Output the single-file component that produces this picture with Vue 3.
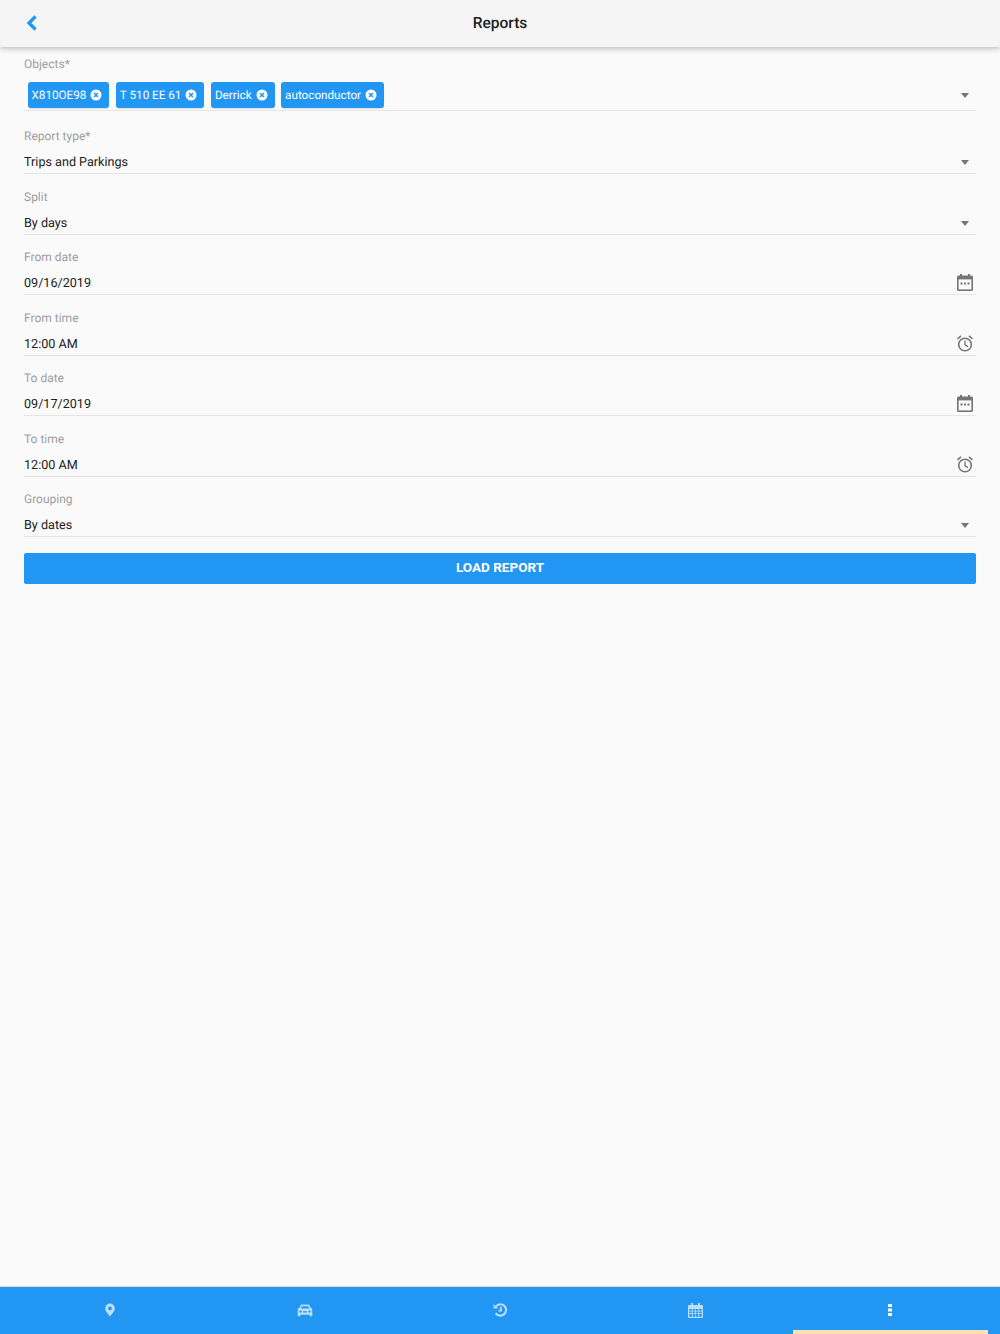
<template>
  <div class="page">
    <header class="topbar">
      <button class="back" aria-label="Back">
        <svg width="14" height="18" viewBox="0 0 14 18"><path d="M10.5 2.5 4 9l6.500 6.500" fill="none" stroke="#2196f3" stroke-width="3.200" /></svg>
      </button>
      <h1 class="title">Reports</h1>
    </header>

    <main class="form">
      <div class="field objects">
        <label>Objects*</label>
        <div class="control">
          <div class="chips">
            <span v-for="chip in chips" :key="chip" class="chip">
              {{ chip }}
              <svg width="12" height="12" viewBox="0 0 12 12">
                <circle cx="6" cy="6" r="5.500" fill="#fff" />
                <path d="M4 4l4 4M8 4l-4 4" stroke="#2196f3" stroke-width="1.500" />
              </svg>
            </span>
          </div>
          <span class="caret"></span>
        </div>
      </div>

      <div v-for="field in fields" :key="field.label" class="field">
        <label>{{ field.label }}</label>
        <div class="control">
          <span class="value">{{ field.value }}</span>
          <span v-if="field.icon === 'select'" class="caret"></span>
          <svg v-else-if="field.icon === 'date'" class="side-icon" width="16" height="17" viewBox="0 0 16 17">
            <path fill="#757575" d="M3 0h2v1.500h6V0h2v1.500h1.500A1.500 1.500 0 0 1 16 3v12.500a1.500 1.500 0 0 1-1.500 1.500h-13A1.500 1.500 0 0 1 0 15.500V3a1.500 1.500 0 0 1 1.500-1.500H3z" />
            <rect x="1.600" y="5.400" width="12.800" height="10" fill="#fafafa" />
            <path fill="#757575" d="M3.500 8.500h2v2h-2zM7 8.500h2v2H7zM10.500 8.500h2v2h-2z" />
          </svg>
          <svg v-else class="side-icon" width="16" height="17" viewBox="0 0 16 17">
            <circle cx="8" cy="9.500" r="6.300" fill="none" stroke="#757575" stroke-width="1.600" />
            <path d="M8 5.500v4.300l3 1.800" fill="none" stroke="#757575" stroke-width="1.300" />
            <path d="M.5 3.800 4 .9M15.500 3.800 12 .9" fill="none" stroke="#757575" stroke-width="1.500" />
          </svg>
        </div>
      </div>

      <button class="load">LOAD REPORT</button>
    </main>

    <nav class="tabs">
      <div class="tab">
        <svg width="12" height="14" viewBox="0 0 12 14">
          <path fill-rule="evenodd" fill="#bbdefb" d="M6 .5a4.800 4.800 0 0 1 4.800 4.800C10.800 8.300 7.500 11.500 6 13.500 4.500 11.500 1.200 8.300 1.200 5.300A4.800 4.800 0 0 1 6 .5zm0 3a1.900 1.900 0 1 0 0 3.800 1.900 1.900 0 0 0 0-3.800z" />
        </svg>
      </div>
      <div class="tab">
        <svg width="16" height="13" viewBox="0 0 16 12" preserveAspectRatio="none">
          <path fill-rule="evenodd" fill="#bbdefb" d="M4.700.5h6.600c.6 0 1 .3 1.300.9l1 2.300h1.100c.4 0 .6.300.5.600l-.2.600-.3.100c.4.400.6.900.6 1.400v4.300c0 .3-.2.500-.5.500h-1.700c-.3 0-.5-.2-.5-.5v-.8H3.400v.8c0 .3-.2.500-.5.500H1.200c-.3 0-.5-.2-.5-.5V6.400c0-.5.200-1 .6-1.400L1 4.900l-.2-.6c-.1-.3.100-.6.500-.6h1.100l1-2.300C3.700.8 4.100.5 4.700.5zM4.800 2 3.800 4.200h8.400L11.200 2zM3.300 6a1 1 0 1 0 0 2h.4a1 1 0 1 0 0-2zm9 0a1 1 0 1 0 0 2h.4a1 1 0 1 0 0-2zM6 6.800v1h4v-1z" />
        </svg>
      </div>
      <div class="tab">
        <svg width="15" height="14" viewBox="0 0 15 14">
          <path fill="none" stroke="#bbdefb" stroke-width="2.100" d="M3 3.300A5.700 5.700 0 1 1 2.600 10" />
          <path fill="#bbdefb" d="M.6 1.200 5.400 5.400H.6z" />
          <path fill="none" stroke="#bbdefb" stroke-width="1.800" d="M8 3.800v3.900H5.500" />
        </svg>
      </div>
      <div class="tab">
        <svg width="15" height="15" viewBox="0 0 15 15">
          <path fill-rule="evenodd" fill="#bbdefb" d="M3 0h2v2h5V0h2v2h2c.5 0 1 .5 1 1v11c0 .5-.5 1-1 1H1c-.5 0-1-.5-1-1V3c0-.5.500-1 1-1h2zM1.300 6v1.700h2.500V6zm3.400 0v1.700h2.400V6zm3.200 0v1.700h2.400V6zm3.300 0v1.700h2.500V6zM1.300 8.500v1.800h2.500V8.500zm3.400 0v1.800h2.400V8.500zm3.200 0v1.800h2.400V8.500zm3.300 0v1.800h2.500V8.500zM1.300 11.100v2.600h2.500v-2.600zm3.400 0v2.600h2.400v-2.600zm3.200 0v2.600h2.400v-2.600zm3.300 0v2.600h2.500v-2.600z" />
        </svg>
      </div>
      <div class="tab active">
        <svg width="4" height="14" viewBox="0 0 4 14">
          <path fill="#fff" d="M0 1h4v3H0zM0 5.500h4v3H0zM0 10h4v3H0z" />
        </svg>
      </div>
    </nav>
  </div>
</template>

<script setup>
const chips = ['X810OE98', 'T 510 EE 61', 'Derrick', 'autoconductor'];

const fields = [
  { label: 'Report type*', value: 'Trips and Parkings', icon: 'select' },
  { label: 'Split', value: 'By days', icon: 'select' },
  { label: 'From date', value: '09/16/2019', icon: 'date' },
  { label: 'From time', value: '12:00 AM', icon: 'time' },
  { label: 'To date', value: '09/17/2019', icon: 'date' },
  { label: 'To time', value: '12:00 AM', icon: 'time' },
  { label: 'Grouping', value: 'By dates', icon: 'select' },
];
</script>

<style scoped>
.page {
  height: 1334px;
  display: flex;
  flex-direction: column;
  background: #fafafa;
  font-family: Roboto, sans-serif;
  color: #212121;
  text-rendering: geometricPrecision;
}

.topbar {
  position: relative;
  flex: none;
  height: 47px;
  padding-bottom: 2px;
  box-sizing: border-box;
  display: flex;
  align-items: center;
  justify-content: center;
  background: #f5f5f5;
  box-shadow: 0 1px 6px rgba(0, 0, 0, 0.3);
}

.back {
  position: absolute;
  left: 25px;
  top: 14px;
  padding: 0;
  border: 0;
  background: none;
  line-height: 0;
}

.title {
  margin: 0;
  font-size: 15.500px;
  font-weight: 500;
}

.form {
  flex: 1;
  padding: 9px 24px 0;
}

.field {
  height: 60.500px;
  display: flex;
  flex-direction: column;
  justify-content: flex-end;
}

.field label {
  font-size: 12px;
  line-height: 14px;
  color: #9e9e9e;
  margin-bottom: 7px;
}

.control {
  height: 24px;
  box-sizing: border-box;
  display: flex;
  align-items: center;
  justify-content: space-between;
  border-bottom: 1px solid #e5e5e5;
}

.value {
  padding-top: 2px;
  font-size: 12.600px;
}

.value + .caret {
  margin-top: 2px;
}

.objects {
  height: auto;
  margin-bottom: 2.500px;
}

.objects label {
  margin-top: 1px;
  margin-bottom: 11px;
}

.objects .control {
  height: 29px;
  padding-bottom: 2px;
}

.chips {
  display: flex;
  gap: 6.500px;
  padding-left: 3.500px;
}

.chip {
  height: 26px;
  display: flex;
  align-items: center;
  gap: 4px;
  padding: 0 7px 0 4px;
  background: #2196f3;
  border-radius: 3px;
  color: #fff;
  font-size: 11.700px;
  white-space: nowrap;
  box-shadow: 0 1px 1px rgba(0, 0, 0, 0.12);
}

.caret {
  width: 0;
  height: 0;
  margin-right: 7px;
  border-left: 4.500px solid transparent;
  border-right: 4.500px solid transparent;
  border-top: 5px solid #757575;
}

.side-icon {
  margin-right: 3.500px;
}

.load {
  display: block;
  width: 100%;
  height: 31px;
  margin-top: 16px;
  padding: 0 0 3px;
  border: 0;
  border-radius: 2px;
  background: #2196f3;
  color: #fff;
  font-family: inherit;
  font-size: 13.500px;
  font-weight: 700;
}

.tabs {
  flex: none;
  height: 47px;
  display: flex;
  padding: 0 12px;
  background: #2196f3;
  box-shadow: 0 -1px 0 #dcdcdc;
}

.tab {
  flex: 1;
  display: flex;
  align-items: center;
  justify-content: center;
  padding-bottom: 1px;
}

.tab.active {
  border-bottom: 4px solid #ffe0b2;
  padding-bottom: 0;
  padding-top: 2px;
}
</style>
